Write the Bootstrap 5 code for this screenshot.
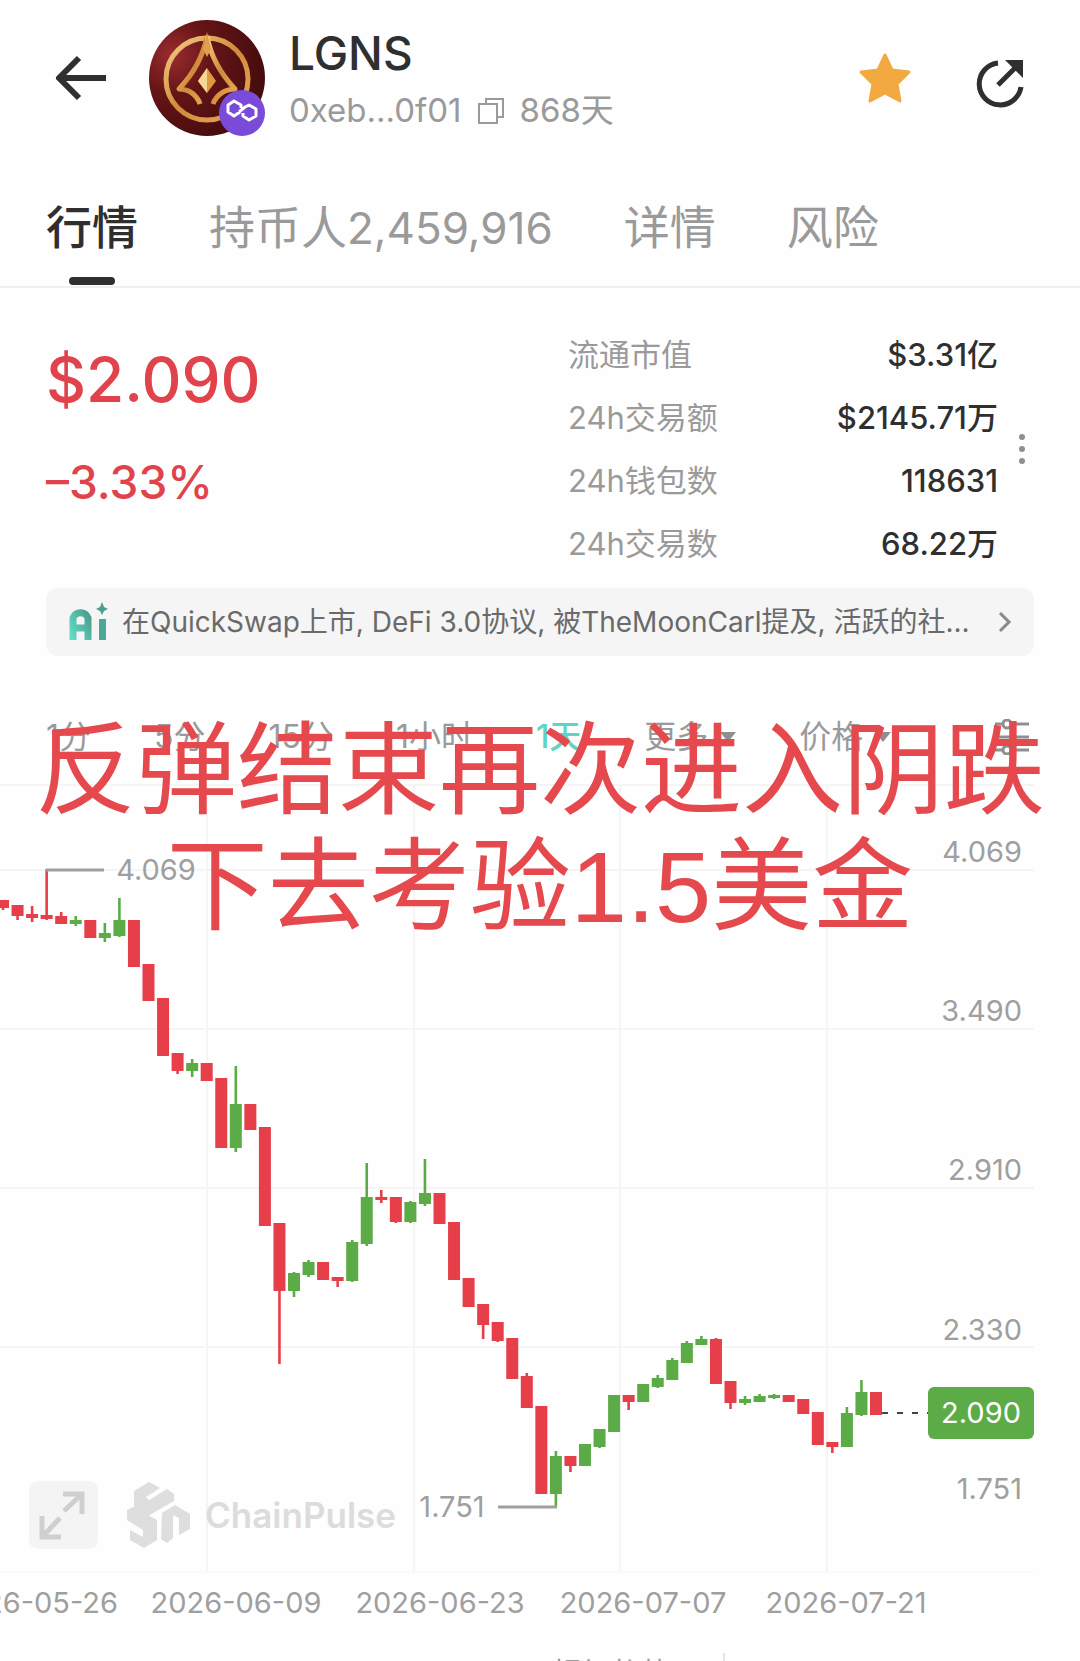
<!DOCTYPE html>
<html lang="zh-CN">
<head>
<meta charset="utf-8">
<meta name="viewport" content="width=device-width, initial-scale=1">
<title>LGNS 行情</title>
<link href="https://cdn.jsdelivr.net/npm/bootstrap@5.3.0/dist/css/bootstrap.min.css" rel="stylesheet">
<style>
  :root { --ink:#2f2f2f; --dim:#9a9a9a; --fall:#e0434b; --rise:#5bab47; --teal:#5fd6c4; }
  body { font-family: Inter, "Noto Sans CJK SC", sans-serif; color: var(--ink); background:#fefefe; }
  button.plain { border:0; background:none; padding:0; color:inherit; display:flex; align-items:center; white-space:nowrap; }
  .topbar { padding: 18px 50px 30px 52px; }
  .coin { width:116px; height:116px; margin-left:40px; }
  .coin-text { padding-top:5px; }
  .coin-title { font-size:46px; line-height:60px; font-weight:500; }
  .coin-sub { font-size:33px; line-height:55px; color:var(--dim); gap:15px; }
  .tabs { gap:71px; padding-left:46px; border-bottom:2px solid #efefef; }
  .tabs a { position:relative; font-size:46px; line-height:60px; padding:29px 0 28px; color:var(--dim); text-decoration:none; white-space:nowrap; }
  .tabs a.on { color:var(--ink); font-weight:500; }
  .tabs a.on::after { content:""; position:absolute; left:50%; bottom:1px; width:46px; height:8px; margin-left:-23px; border-radius:4px; background:var(--ink); }
  .tabs .num { font-size:44px; }
  .summary { padding:35px 40px 13px 46px; }
  .price { font-size:62px; line-height:80px; font-weight:500; color:var(--fall); padding-top:17px; }
  .change { font-size:46px; line-height:60px; font-weight:500; color:var(--fall); margin-top:32px; }
  .stats { width:430px; font-size:31px; margin:0; }
  .stats dt, .stats dd { line-height:63px; margin:0; }
  .stats dt { font-weight:400; color:var(--dim); }
  .stats dd { font-weight:500; }
  .kebab { width:36px; margin-left:6px; justify-content:center; }
  .insight { margin:0 46px; height:68px; border-radius:12px; background:#f5f5f5; padding:0 22px 0 20px; font-size:28px; color:#6a6a6a; text-decoration:none; gap:12px; }
  .chart-area { padding-top:51px; }
  .frames { height:60px; padding:0 50px 0 46px; gap:63px; font-size:32px; color:var(--dim); }
  .frames button.on { color:var(--teal); font-weight:500; }
  .frames .caret-icon { margin-left:12px; }
  .overlay-note { position:absolute; top:57px; left:0; right:0; margin:0; text-align:center; font-family:"Liberation Sans","Noto Sans CJK SC",sans-serif; font-weight:400; font-size:101px; line-height:116px; color:#e5484d; white-space:nowrap; pointer-events:none; }
  .chart { display:block; width:100%; height:auto; font-size:29px; }
  .indicators { padding-top:6px; font-size:30px; line-height:40px; color:var(--dim); gap:52px; padding-left:551px; }
  .indicators .rule { width:2px; height:32px; background:#e5e5e5; }
</style>
<script src="https://cdn.jsdelivr.net/npm/bootstrap@5.3.0/dist/js/bootstrap.bundle.min.js"></script>
</head>
<body>
<main class="vh-100 overflow-hidden">
  <header class="topbar d-flex align-items-center">
    <button class="plain" type="button" aria-label="返回">
      <svg width="57" height="48" viewBox="0 0 57 48" fill="none" stroke="#2f2f2f" stroke-width="6"><path d="M54 24H8M27 4L7 24l20 20" stroke-linejoin="round"/></svg>
    </button>
    <svg class="coin flex-shrink-0" viewBox="0 0 116 116" role="img" aria-label="LGNS">
      <defs>
        <radialGradient id="wine" cx=".2" cy=".3" r=".85"><stop offset="0" stop-color="#9a2c30"/><stop offset=".4" stop-color="#641416"/><stop offset="1" stop-color="#430c0d"/></radialGradient>
        <linearGradient id="gold" x1="0" y1="0" x2="1" y2="1"><stop offset="0" stop-color="#f6cf86"/><stop offset=".5" stop-color="#d08a3a"/><stop offset="1" stop-color="#e9a958"/></linearGradient>
      </defs>
      <circle cx="58" cy="58" r="58" fill="url(#wine)"/>
      <circle cx="58" cy="59" r="41" fill="none" stroke="url(#gold)" stroke-width="5"/>
      <path d="M58 16C55 32 46 52 30 69C40 69 48 75 51 84" fill="none" stroke="url(#gold)" stroke-width="5" stroke-linejoin="round"/>
      <path d="M58 16C61 32 70 52 86 69C76 69 67 75 64 84" fill="none" stroke="url(#gold)" stroke-width="5" stroke-linejoin="round"/>
      <path d="M58 12l4 17-4 8-4-8z" fill="#dfa04e"/>
      <path d="M58 48l9 13-9 12-9-12z" fill="#e0993f"/><path d="M58 48v25l-9-12z" fill="#f8d795"/>
      <circle cx="93" cy="93" r="23" fill="#7a4bd8"/>
      <path d="M91 92l-6 4-6-4v-7l6-4 7 4v3M90 92l6-5 4-2 7 4v7l-7 4-6-4v-3" fill="none" stroke="#fff" stroke-width="3" stroke-linejoin="round"/>
    </svg>
    <div class="coin-text ms-4 flex-grow-1">
      <div class="coin-title">LGNS</div>
      <div class="coin-sub d-flex align-items-center">
        <span>0xeb...0f01</span>
        <button class="plain" type="button" aria-label="复制地址">
          <svg width="28" height="28" viewBox="0 0 28 28" fill="none" stroke="#9a9a9a" stroke-width="2"><rect x="2" y="7" width="18" height="19"/><path d="M9 7V2h17v18h-6"/></svg>
        </button>
        <span>868天</span>
      </div>
    </div>
    <button class="plain" type="button" aria-label="收藏">
      <svg width="54" height="54" viewBox="0 0 54 54"><path d="M27 4l7 15 17 2-12 12 3 17-15-8-15 8 3-17L3 21l17-2z" fill="#f2a940" stroke="#f2a940" stroke-width="3" stroke-linejoin="round"/></svg>
    </button>
    <button class="plain ms-5" type="button" aria-label="分享">
      <svg width="70" height="60" viewBox="0 0 70 60"><path d="M38 15a21 21 0 1 0 23 24" fill="none" stroke="#2f2f2f" stroke-width="5"/><path d="M38 37l18-18" stroke="#2f2f2f" stroke-width="5"/><path d="M45 12h18v18z" fill="#2f2f2f"/></svg>
    </button>
  </header>

  <nav class="tabs d-flex">
    <a class="on" href="#market" aria-current="page">行情</a>
    <a href="#holders">持币人<span class="num">2,459,916</span></a>
    <a href="#detail">详情</a>
    <a href="#risk">风险</a>
  </nav>

  <section class="summary d-flex">
    <div class="flex-grow-1">
      <div class="price">$2.090</div>
      <div class="change">–3.33%</div>
    </div>
    <dl class="stats">
      <div class="d-flex justify-content-between"><dt>流通市值</dt><dd>$3.31亿</dd></div>
      <div class="d-flex justify-content-between"><dt>24h交易额</dt><dd>$2145.71万</dd></div>
      <div class="d-flex justify-content-between"><dt>24h钱包数</dt><dd>118631</dd></div>
      <div class="d-flex justify-content-between"><dt>24h交易数</dt><dd>68.22万</dd></div>
    </dl>
    <button class="plain kebab" type="button" aria-label="更多数据">
      <svg width="8" height="32" viewBox="0 0 8 32" fill="#8f8f8f"><circle cx="4" cy="4" r="3"/><circle cx="4" cy="16" r="3"/><circle cx="4" cy="28" r="3"/></svg>
    </button>
  </section>

  <a class="insight d-flex align-items-center" href="#insight">
    <svg class="flex-shrink-0" width="44" height="40" viewBox="0 0 44 40" role="img" aria-label="Ai">
      <defs><linearGradient id="mint" x1="0" y1="1" x2="1" y2="0"><stop offset="0" stop-color="#62dcc6"/><stop offset="1" stop-color="#4a9f8c"/></linearGradient></defs>
      <path d="M7 38V16a8 8 0 0 1 15 0v22M7 26h15" fill="none" stroke="url(#mint)" stroke-width="7"/>
      <path d="M33 17h7v21h-7z" fill="#4aa894"/><path d="M36 0l2 5 4 2-4 2-2 4-2-4-4-2 4-2z" fill="#4a9f8c"/>
    </svg>
    <span class="text-truncate flex-grow-1">在QuickSwap上市, DeFi 3.0协议, 被TheMoonCarl提及, 活跃的社...</span>
    <svg class="flex-shrink-0" width="14" height="24" viewBox="0 0 14 24" fill="none" stroke="#8a8a8a" stroke-width="3"><path d="M2 3l9 9-9 9"/></svg>
  </a>

  <section class="chart-area position-relative">
    <div class="frames d-flex align-items-center">
      <button class="plain" type="button">1分</button>
      <button class="plain" type="button">5分</button>
      <button class="plain" type="button">15分</button>
      <button class="plain" type="button">1小时</button>
      <button class="plain on" type="button">1天</button>
      <button class="plain" type="button">更多<svg class="caret-icon" width="16" height="10" viewBox="0 0 16 10"><path d="M0 0h16L8 10z" fill="#8f8f8f"/></svg></button>
      <button class="plain" type="button">价格<svg class="caret-icon" width="16" height="10" viewBox="0 0 16 10"><path d="M0 0h16L8 10z" fill="#8f8f8f"/></svg></button>
      <button class="plain ms-auto" type="button" aria-label="图表设置"><svg width="36" height="36" viewBox="0 0 36 36" fill="none" stroke="#8f8f8f" stroke-width="3"><path d="M1 5h8m9 0h17M1 18h34M1 31h8m9 0h17"/><circle cx="13" cy="5" r="4"/><circle cx="13" cy="31" r="4"/></svg></button>
    </div>

    <svg class="chart" viewBox="0 767 1080 880" role="img" aria-label="日线图">
      <g stroke="#f5f5f5" stroke-width="2">
        <path d="M0 785H1034M0 870H1034M0 1029H1034M0 1188H1034M0 1347H1034"/>
        <path d="M207 785V1571M414 785V1571M620 785V1571M827 785V1571"/>
        <path d="M0 1572H1034" stroke="#fafafa"/>
      </g>
      <rect x="29" y="1481" width="69" height="68" rx="9" fill="#f4f4f4"/>
      <g fill="none" stroke="#cfcfcf" stroke-width="5">
        <path d="M64 1511l18-17M63 1494h19v20M60 1518l-17 18M42 1516v21h19"/>
      </g>
      <g fill="#dedede">
        <path d="M134 1491l15-9 11 6-14 9 3 3 18-11 7 5v7l-26 15-14-8z"/>
        <path d="M127 1510l6-3 24 13v20l-13 8-14-8v-10l13 7v-7l-16-10z"/>
        <path d="M162 1513l13-8 15 9v15l-11 6v-17l-6-3v23l-6 5-6-4z"/>
      </g>
      <text x="205" y="1528" font-size="35" font-weight="600" fill="#dcdcdc">ChainPulse</text>
      <g fill="#9f9f9f" text-anchor="end">
        <text x="1022" y="862">4.069</text><text x="1022" y="1021">3.490</text><text x="1022" y="1180">2.910</text>
        <text x="1022" y="1340">2.330</text><text x="1022" y="1499">1.751</text>
        <text x="118" y="1613">2026-05-26</text>
      </g>
      <g fill="#9f9f9f" text-anchor="middle">
        <text x="236" y="1613">2026-06-09</text><text x="440" y="1613">2026-06-23</text><text x="643" y="1613">2026-07-07</text><text x="846" y="1613">2026-07-21</text>
        <text x="156" y="880">4.069</text><text x="452" y="1517">1.751</text>
      </g>
      <path d="M882 1413H928" stroke="#444" stroke-width="2" stroke-dasharray="6 9"/>
      <g id="candles"></g>
      <path d="M46 870H104M498 1507H557" stroke="#9f9f9f" stroke-width="3"/>
      <rect x="928" y="1387" width="106" height="52" rx="6" fill="#5bab47"/>
      <text x="981" y="1423" fill="#fff" text-anchor="middle">2.090</text>
    </svg>
    <h1 class="overlay-note">反弹结束再次进入阴跌<br>下去考验1.5美金</h1>
  </section>

  <div class="indicators d-flex align-items-start"><span>超级趋势</span><span class="rule"></span></div>
</main>
<script>
  // one row per day: direction, body top, body bottom, wick top, wick bottom
  const days = [
    ['r',900,908,900,910],['r',905,916,905,920],['r',914,918,906,922],['r',915,919,869,920],['r',916,924,912,924],
    ['g',920,924,916,926],['r',920,938,920,938],['g',933,938,923,942],['g',920,936,898,937],['r',920,967,920,967],
    ['r',964,1001,964,1001],['r',998,1056,998,1056],['r',1053,1071,1053,1074],['g',1063,1071,1059,1077],['r',1063,1081,1063,1081],
    ['r',1078,1148,1078,1148],['g',1104,1148,1066,1152],['r',1104,1130,1104,1130],['r',1127,1226,1127,1226],['r',1223,1291,1223,1364],
    ['g',1273,1291,1272,1297],['g',1262,1275,1260,1277],['r',1262,1280,1262,1280],['r',1277,1281,1277,1287],['g',1242,1281,1240,1282],
    ['g',1197,1244,1163,1246],['r',1197,1200,1190,1203],['r',1197,1222,1197,1223],['g',1202,1222,1201,1223],['g',1193,1204,1159,1206],
    ['r',1193,1224,1193,1224],['r',1222,1280,1222,1280],['r',1278,1307,1278,1307],['r',1304,1325,1304,1339],['r',1322,1341,1322,1342],
    ['r',1338,1379,1338,1379],['r',1376,1408,1373,1408],['r',1406,1494,1406,1494],['g',1456,1494,1451,1507],['r',1456,1466,1456,1472],
    ['g',1444,1466,1444,1466],['g',1429,1447,1429,1448],['g',1395,1432,1395,1432],['r',1395,1402,1395,1410],['g',1384,1402,1384,1402],
    ['g',1378,1387,1375,1388],['g',1360,1380,1358,1380],['g',1343,1363,1341,1363],['g',1339,1345,1336,1345],['r',1339,1384,1338,1384],
    ['r',1381,1403,1381,1409],['g',1399,1403,1396,1405],['g',1396,1402,1394,1402],['g',1395,1398,1394,1399],['r',1395,1402,1395,1402],
    ['r',1399,1414,1399,1414],['r',1412,1445,1412,1445],['r',1442,1447,1442,1453],['g',1413,1447,1407,1447],['g',1392,1415,1380,1416],
    ['r',1392,1415,1392,1415]
  ];
  const step = 873 / 60;
  document.getElementById('candles').innerHTML = days.map(([d, top, bottom, high, low], i) => {
    const x = 3 + i * step, c = d === 'r' ? '#e63f4a' : '#5bab47';
    return `<rect x="${x - 6}" y="${top}" width="12" height="${bottom - top}" fill="${c}"/><rect x="${x - 1.3}" y="${high}" width="2.6" height="${low - high}" fill="${c}"/>`;
  }).join('');
</script>
</body>
</html>
